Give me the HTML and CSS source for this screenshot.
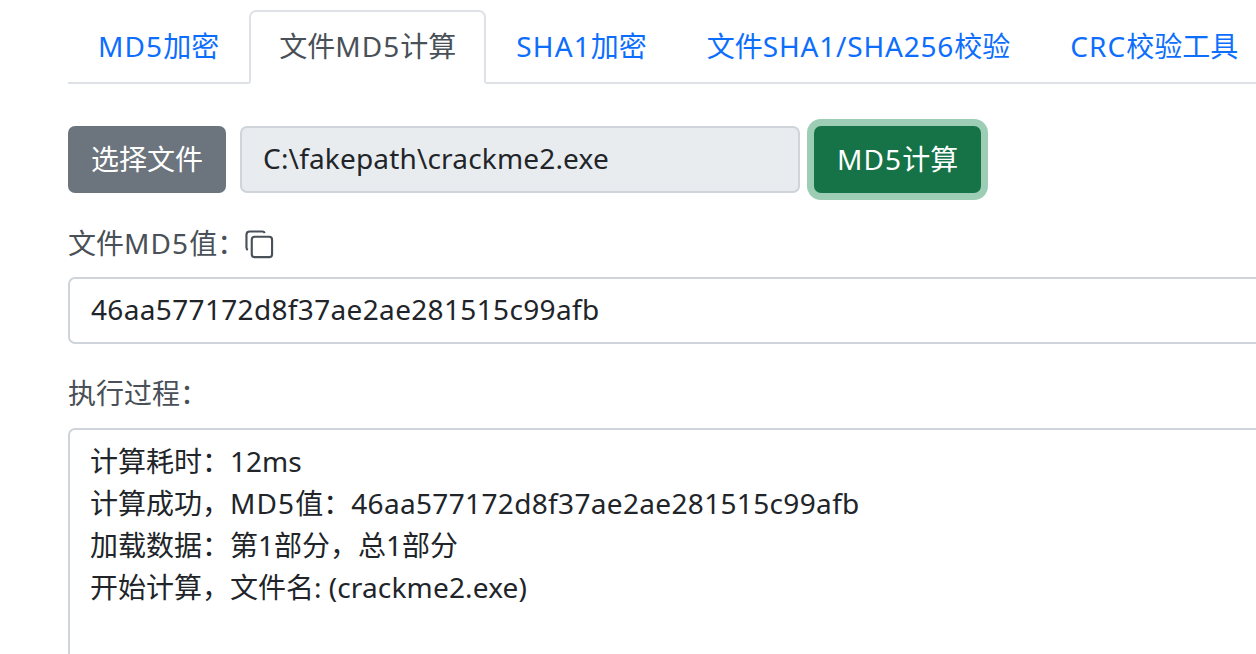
FILE: index.html
```html
<!DOCTYPE html>
<html lang="en">
<head>
<meta charset="UTF-8">
<meta name="viewport" content="width=device-width, initial-scale=1.0">
<title>文件MD5计算</title>
<link rel="stylesheet" href="styles.css">
</head>
<body>
<div class="page">
  <ul class="tabs">
    <li><a class="tab" href="#"><span class="caps">MD5</span>加密</a></li>
    <li><a class="tab active" href="#">文件<span class="caps">MD5</span>计算</a></li>
    <li><a class="tab" href="#"><span class="caps">SHA1</span>加密</a></li>
    <li><a class="tab" href="#">文件<span class="caps-long">SHA1/SHA256</span>校验</a></li>
    <li><a class="tab" href="#"><span class="caps">CRC</span>校验工具</a></li>
  </ul>

  <div class="file-row">
    <button class="btn btn-grey">选择文件</button>
    <input class="file-name" type="text" value="C:\fakepath\crackme2.exe" readonly>
    <button class="btn btn-green"><span class="caps">MD5</span>计算</button>
  </div>

  <div class="field-label">
    <span>文件<span class="caps">MD5</span>值：</span>
    <svg class="copy-icon" viewBox="0 0 30 30" width="29" height="29" fill="none" stroke="currentColor" stroke-width="2.2">
      <rect x="7" y="7" width="21" height="21" rx="3"/>
      <path d="M3 20.5C2 20 1.500 19 1.500 18V5C1.500 3 3 1.500 5 1.500H18C19 1.500 20 2 20.500 3"/>
    </svg>
  </div>
  <input class="text-box" type="text" value="46aa577172d8f37ae2ae281515c99afb" readonly>

  <div class="field-label log-label">执行过程：</div>
  <div class="log-box">
    <div>计算耗时：12ms</div>
    <div>计算成功，<span class="caps">MD5</span>值：<span class="hash">46aa577172d8f37ae2ae281515c99afb</span></div>
    <div>加载数据：第1部分，总1部分</div>
    <div>开始计算，文件名: (<span class="word">crackme2.exe</span>)</div>
  </div>
</div>
</body>
</html>
```

FILE: styles.css
```css
:root {
  --border-color: #ced4da;
  --tab-border: #dee2e6;
  --text-color: #212529;
  --label-color: #495057;
}

body {
  margin: 0;
  height: 654px;
  overflow: hidden;
  background: #fff;
  color: var(--text-color);
  font-family: "Noto Sans", "Noto Sans CJK SC", sans-serif;
  font-size: 28px;
  line-height: 42px;
}

.page {
  width: 1400px;
  padding: 10px 0 0 68px;
}

.caps {
  letter-spacing: 1.1px;
}

.caps-long {
  letter-spacing: 0.8px;
}

.hash {
  letter-spacing: 0.34px;
}

.word {
  letter-spacing: 0.17px;
}

.tabs {
  display: flex;
  list-style: none;
  margin: 0 0 42px;
  padding: 0;
  border-bottom: 2px solid var(--tab-border);
}

.tab {
  display: block;
  margin-bottom: -2px;
  padding: 13px 28px 15px;
  border: 2px solid transparent;
  border-radius: 7px 7px 0 0;
  color: #0d6efd;
  text-decoration: none;
}

.tab.active {
  color: var(--label-color);
  background: #fff;
  border-color: var(--tab-border) var(--tab-border) #fff;
}

.file-row {
  display: flex;
  align-items: center;
  gap: 14px;
}

.btn {
  height: 67px;
  padding: 0 23px 2px;
  border: 0;
  border-radius: 7px;
  color: #fff;
  font: inherit;
}

.btn-grey {
  background: #6c757d;
}

.btn-green {
  background: #157347;
  box-shadow: 0 0 0 7px #9dcdb5;
}

.file-name,
.text-box {
  box-sizing: border-box;
  height: 67px;
  padding: 0 21px 3px;
  border: 2px solid var(--border-color);
  border-radius: 7px;
  color: var(--text-color);
  font: inherit;
}

.file-name {
  width: 560px;
  background: #e9ecef;
  letter-spacing: 0.17px;
}

.field-label {
  display: flex;
  align-items: center;
  margin: 29px 0 13px;
  color: var(--label-color);
}

.copy-icon {
  margin-top: 2px;
}

.text-box {
  display: block;
  width: 100%;
  padding-bottom: 4px;
  letter-spacing: 0.34px;
}

.log-label {
  margin-top: 28px;
  margin-bottom: 14px;
}

.log-box {
  box-sizing: border-box;
  height: 400px;
  padding: 10px 20px;
  border: 2px solid var(--border-color);
  border-radius: 7px;
}
```
